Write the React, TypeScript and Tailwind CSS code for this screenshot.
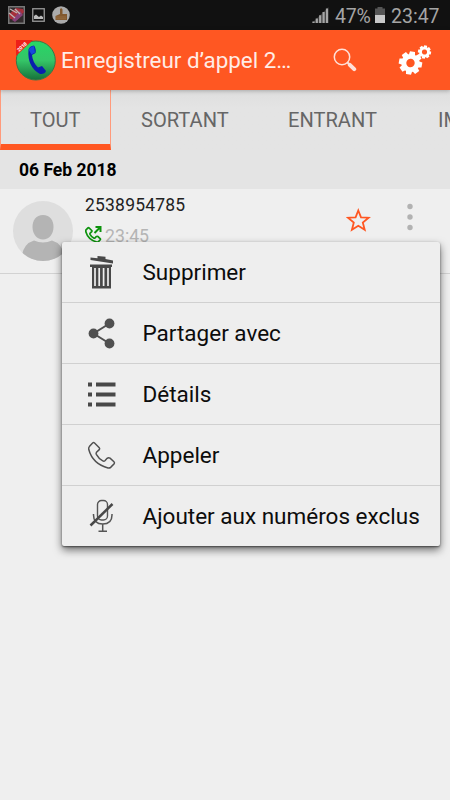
import React from 'react';

const HANDSET =
  'M5.2 1.6Q6.2.7 7.2 1.5L12 6.3Q12.9 7.3 12 8.3L9.2 11Q8.4 12 9 13.2Q11.4 17.6 15.6 19.8Q16.8 20.4 17.8 19.6L20 17.2Q21.4 16 23 17L27 20.6Q28 21.6 27.2 22.8L23.6 26.4Q22.6 27.3 21 27Q5.4 23 1.3 8.2Q.9 6.4 1.9 5.2Z';

interface GearProps {
  cx: number;
  cy: number;
  r: number;
  hole: number;
}

const Gear: React.FC<GearProps> = ({ cx, cy, r, hole }) => (
  <g transform={`translate(${cx} ${cy}) rotate(10)`}>
    <circle r={(r * 0.78 + hole) / 2} fill="none" stroke="#fff" strokeWidth={r * 0.78 - hole} />
    {[0, 45, 90, 135, 180, 225, 270, 315].map((a) => (
      <path
        key={a}
        transform={`rotate(${a})`}
        d={`M${-r * 0.27} ${-r * 0.68}L${-r * 0.22} ${-r}H${r * 0.22}L${r * 0.27} ${-r * 0.68}Z`}
        fill="#fff"
      />
    ))}
  </g>
);

const StatusBar = () => (
  <div className="h-[30px] bg-[#111] flex items-center pl-2 pr-[10px]">
    <svg width="17" height="18" viewBox="0 0 17 18">
      <rect width="17" height="18" fill="#777" />
      <rect x="1.5" y="1.5" width="14" height="15" fill="#332b2d" />
      <path d="M1 8L8 2L15 3L16 6L9 14L2 13Z" fill="#a72f3b" />
      <path d="M4 14L12 5L15 9L7 16Z" fill="#874078" />
      <path d="M2 3L9 7M1 7L7 12M7 3L12 8" stroke="#bdb4b4" strokeWidth="1.3" />
    </svg>
    <svg className="ml-[7px]" width="13" height="14" viewBox="0 0 13 14">
      <rect x=".75" y=".75" width="11.5" height="12.5" fill="none" stroke="#9a9a9a" strokeWidth="1.3" />
      <path d="M2 11V8L4 6.5L7 9L9 7.5L11 9V11Z" fill="#bbb" />
    </svg>
    <svg className="ml-[7px]" width="18" height="18" viewBox="0 0 18 18">
      <circle cx="9" cy="9" r="8.8" fill="#aaa" />
      <path d="M8 3Q9.5 1.5 10.5 3.5V8H15V14H3.5V10L8 8Z" fill="#82592f" />
      <path d="M4 11H14M4 12.8H14" stroke="#a57b4c" strokeWidth=".6" />
    </svg>
    <div className="flex-1" />
    <svg width="17" height="16" viewBox="0 0 17 16">
      <path d="M0 16L16.5 0V16Z" fill="#3a3a3a" />
      <path d="M1.5 16V14.5M4.8 16V11.5M8.2 16V8.2M11.6 16V5M15 16V1.5" stroke="#a5a5a5" strokeWidth="2.2" />
    </svg>
    <span className="ml-[6px] w-[36px] text-[19.5px] leading-[30px] pt-[3px] whitespace-nowrap tracking-[-0.2px] text-[#a5a5a5]">47%</span>
    <svg className="ml-[4px]" width="10" height="16" viewBox="0 0 10 16">
      <path d="M2.5 0H7.5V1.5H10V8H0V1.5H2.5Z" fill="#555" />
      <rect y="8" width="10" height="8" fill="#c8c8c8" />
    </svg>
    <span className="ml-[6px] w-[49px] text-[19.5px] leading-[30px] pt-[3px] whitespace-nowrap text-[#a5a5a5]">23:47</span>
  </div>
);

const AppBar = () => (
  <div className="h-[60px] bg-[#ff5722] flex items-center pl-[15px] relative z-10 shadow-[0_1px_4px_rgba(0,0,0,0.25)]">
    <svg className="overflow-visible" width="41" height="41" viewBox="0 0 41 41">
      <defs>
        <linearGradient id="ball" x1="0" y1="0" x2="0" y2="1">
          <stop offset="0" stopColor="#27d766" />
          <stop offset=".5" stopColor="#35c567" />
          <stop offset="1" stopColor="#16713b" />
        </linearGradient>
      </defs>
      <circle cx="20.8" cy="20.5" r="19.5" fill="url(#ball)" stroke="#397747" />
      <path d="M1 0H18L1 16Z" fill="#ee2018" />
      <text x="4" y="12" transform="rotate(-43 4 12)" fontSize="5" fontWeight="700" fill="#fff">2018</text>
      <path d="M13.5 9.5Q14.5 6 19 5.5Q21.5 9 20.5 13L17 15Q17.5 22 23 27.5L27 26L31 31Q30 34.5 25 34Q12 27 13.5 9.5Z" fill="#0a1fae" />
      <path d="M13.8 10Q15 6.5 19 6L20 12.5L16.5 14.5Z" fill="#1649dd" />
    </svg>
    <h1 className="ml-[5px] w-[232px] text-[22.4px] leading-[60px] whitespace-nowrap text-[#ffece6]">Enregistreur d’appel 2…</h1>
    <svg className="ml-[40px]" width="24" height="24" viewBox="0 0 24 24">
      <circle cx="9" cy="9" r="7.7" fill="none" stroke="#ffe0d8" strokeWidth="1.5" />
      <path d="M14.5 14.5L16.5 16.5" stroke="#ffe0d8" strokeWidth="2" />
      <path d="M16.8 16.8L21.2 21.2" stroke="#ffe0d8" strokeWidth="4" strokeLinecap="round" />
    </svg>
    <svg className="ml-[41px]" width="34" height="30" viewBox="0 0 34 30">
      <Gear cx={12.5} cy={18} r={11.6} hole={4.2} />
      <Gear cx={26.5} cy={7} r={6.6} hole={2.6} />
    </svg>
  </div>
);

const Tabs = () => (
  <div className="h-[60px] w-full overflow-hidden flex bg-gradient-to-b from-[#dedede] to-[#e4e4e4] to-30% text-[20.1px] leading-[61px] text-[#666] whitespace-nowrap">
    <div className="w-[111px] shrink-0 pl-[29px] border-x border-b-[6px] border-x-[#ff9a7b] border-b-[#ff5722]">TOUT</div>
    <div className="w-[147px] shrink-0 pl-[30px]">SORTANT</div>
    <div className="w-[150px] shrink-0 pl-[30px]">ENTRANT</div>
    <div className="shrink-0 pl-[30px]">IMPORTANT</div>
  </div>
);

const CallRow = () => (
  <div className="h-[85px] flex items-start border-b border-[#d2d2d2] pl-[13px]">
    <svg className="mt-[12px]" width="60" height="60" viewBox="0 0 60 60">
      <clipPath id="avatar"><circle cx="30" cy="30" r="30" /></clipPath>
      <g clipPath="url(#avatar)">
        <rect width="60" height="60" fill="#dedede" />
        <path d="M30 14C37 14 40.5 19 40.5 26C40.5 33 36 38.5 30 38.5S19.5 33 19.5 26C19.5 19 23 14 30 14Z" fill="#b4b4b4" />
        <path d="M8 60Q9 43 21 39.5Q30 43.5 39 39.5Q51 43 52 60Z" fill="#b4b4b4" />
      </g>
    </svg>
    <div className="ml-[12px] w-[260px] pt-[4px]">
      <div className="text-[17.5px] leading-6 tracking-[0.2px] text-[#222]">2538954785</div>
      <div className="flex items-center mt-[7px] h-6">
        <svg className="mb-[3px]" width="17" height="17" viewBox="0 0 17 17">
          <path d={HANDSET} transform="translate(0 1) scale(.56)" fill="none" stroke="#0d930d" strokeWidth="3" />
          <path d="M9.5 7L15 1.5M10.5 1H15.5V6" fill="none" stroke="#0d930d" strokeWidth="2" />
        </svg>
        <span className="ml-[3px] text-[17.7px] text-[#b5b5b5]">23:45</span>
      </div>
    </div>
    <svg className="mt-[19px] ml-px" width="25" height="24" viewBox="0 0 25 24">
      <path d="M12.3 2.5L15 9.3L22.6 9.7L16.8 14.5L18.7 21.8L12.3 17.8L5.9 21.8L7.8 14.5L2 9.7L9.6 9.3Z" fill="none" stroke="#ff5722" strokeWidth="1.8" />
    </svg>
    <svg className="mt-[14px] ml-[36px]" width="6" height="28" viewBox="0 0 6 28">
      <circle cx="3" cy="3.5" r="2.7" fill="#b2b2b2" />
      <circle cx="3" cy="14" r="2.7" fill="#b2b2b2" />
      <circle cx="3" cy="24.5" r="2.7" fill="#b2b2b2" />
    </svg>
  </div>
);

const TrashIcon = () => (
  <svg width="30" height="34" viewBox="0 0 30 34">
    <path d="M3.5 2.5L10.5 3.2V1L18.5 1.8V4L26 5.5V8.5L3.5 5Z" fill="#484848" />
    <path d="M3 9.5H25V12H24V33.5H5V12H3Z" fill="#484848" />
    <path d="M8 13V31M12.2 13V31M16.6 13V31M21 13V31" stroke="#eee" strokeWidth="1.7" />
  </svg>
);

const ShareIcon = () => (
  <svg width="30" height="34" viewBox="0 0 30 34">
    <path d="M22.5 7.5L6.5 17.5L22.5 27.5" fill="none" stroke="#505050" strokeWidth="2" />
    <circle cx="22.5" cy="7.5" r="4.9" fill="#505050" />
    <circle cx="6.5" cy="17.5" r="4.9" fill="#505050" />
    <circle cx="22.5" cy="27.5" r="4.9" fill="#505050" />
  </svg>
);

const ListIcon = () => (
  <svg width="30" height="34" viewBox="0 0 30 34">
    <path d="M1 7.5H5M1 17.5H5M1 27.5H5M9 7.5H28.5M9 17.5H28.5M9 27.5H28.5" stroke="#484848" strokeWidth="4" />
  </svg>
);

const PhoneIcon = () => (
  <svg width="30" height="34" viewBox="0 0 30 34">
    <path d={HANDSET} transform="translate(.5 3.5) scale(.98)" fill="none" stroke="#505050" strokeWidth="1.5" />
  </svg>
);

const MicOffIcon = () => (
  <svg width="30" height="34" viewBox="0 0 30 34">
    <rect x="10.5" y="1.5" width="10" height="19.5" rx="4" fill="none" stroke="#555" strokeWidth="1.4" />
    <path d="M6.5 15V16Q6.5 25 15.7 25Q25 25 25 16V15M15.7 25V31.5M11.5 32.3H20" fill="none" stroke="#555" strokeWidth="1.5" />
    <path d="M3.5 26.5L25.5 5" stroke="#484848" strokeWidth="2.5" />
  </svg>
);

const items = [
  { label: 'Supprimer', icon: <TrashIcon /> },
  { label: 'Partager avec', icon: <ShareIcon /> },
  { label: 'Détails', icon: <ListIcon /> },
  { label: 'Appeler', icon: <PhoneIcon /> },
  { label: 'Ajouter aux numéros exclus', icon: <MicOffIcon /> },
];

const ContextMenu = () => (
  <div className="absolute left-[62px] top-[242px] w-[378px] rounded-[2px] bg-[#eee] shadow-[0_4px_8px_rgba(0,0,0,0.55),0_1px_2px_rgba(0,0,0,0.5)]">
    {items.map((item) => (
      <div key={item.label} className="h-[61px] flex items-center pl-[25px] border-b border-[#d0d0d0] last:h-[60px] last:border-b-0">
        {item.icon}
        <span className="ml-[25.5px] text-[22.5px] leading-[60px] whitespace-nowrap text-[#0c0c0c]">{item.label}</span>
      </div>
    ))}
  </div>
);

export default function App() {
  return (
    <div className="relative w-[450px] h-[800px] overflow-hidden bg-[#efefef] font-['Roboto',sans-serif]">
      <StatusBar />
      <AppBar />
      <Tabs />
      <div className="h-[39px] bg-[#e4e4e4] pl-[19px] text-[17.5px] leading-[41px] font-bold text-black">06 Feb 2018</div>
      <CallRow />
      <ContextMenu />
    </div>
  );
}
